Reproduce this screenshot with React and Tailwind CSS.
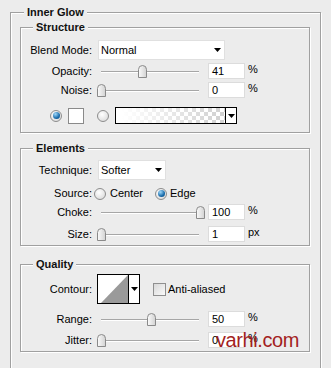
// Photoshop-style "Inner Glow" layer style panel

import React from 'react';

const Arrow = () => (
  <svg width="7" height="4" viewBox="0 0 7 4" className="shrink-0">
    <path d="M0 0H7L3.5 4Z" fill="#000" />
  </svg>
);

const Radio = ({ on }) => (
  <div className="w-[12px] h-[12px] shrink-0 rounded-full border border-[#8d8d8d] bg-[radial-gradient(circle_at_40%_35%,#ffffff,#d4d4d4)] flex items-center justify-center">
    {on && (
      <div className="w-[7px] h-[7px] rounded-full bg-[radial-gradient(circle_at_35%_30%,#9fd8fa,#1a6cab_60%,#0b4476)]" />
    )}
  </div>
);

const Thumb = ({ left }) => (
  <svg
    width="9"
    height="13"
    viewBox="0 0 9 13"
    className="absolute top-[2px]"
    style={{ left: `${left}px` }}
  >
    <defs>
      <linearGradient id="thumbFill" x1="0" x2="1" y1="0" y2="0">
        <stop offset="0" stopColor="#fbfbfb" />
        <stop offset="1" stopColor="#d2d2d2" />
      </linearGradient>
    </defs>
    <path
      d="M0.5 12.5V4.5Q0.5 0.5 4.5 0.5Q8.5 0.5 8.5 4.5V12.5Z"
      fill="url(#thumbFill)"
      stroke="#8a8a8a"
    />
  </svg>
);

const Slider = ({ pct }) => (
  <div className="relative ml-[5px] w-[107px] h-[16px] shrink-0">
    <div className="absolute left-[4px] right-[5px] top-[8px] h-[2px] border-t border-[#a6a6a6] bg-white" />
    <Thumb left={Math.round((pct * 99) / 100)} />
  </div>
);

const Label = ({ children }) => (
  <span className="w-[71px] shrink-0 text-right">{children}</span>
);

function SliderRow({ label, pct, value, unit, className }) {
  return (
    <div className={`flex items-center h-[16px] ${className}`}>
      <Label>{label}</Label>
      <Slider pct={pct} />
      <div className="ml-[4px] w-[37px] h-[16px] shrink-0 bg-white border border-[#dcdcdc] pl-[3px] leading-[14px]">
        {value}
      </div>
      <span className="ml-[3px] self-start leading-[12px]">{unit}</span>
    </div>
  );
}

function Group({ title, className, children }) {
  return (
    <fieldset
      className={`border border-[#a0a0a0] shadow-[1px_1px_0_#fff,inset_1px_1px_0_#fff] ${className}`}
    >
      <legend className="ml-[12px] px-[3px] h-[15px] leading-[15px] bg-[#ececec] font-bold text-[#111]">
        {title}
      </legend>
      {children}
    </fieldset>
  );
}

export default function App() {
  return (
    <div className="relative w-[331px] h-[368px] overflow-hidden bg-[#ececec] pt-[5px] text-[11px] text-black font-['Liberation_Sans',Arial,sans-serif]">
      {/* Outer frame */}
      <fieldset className="ml-[10px] w-[311px] pb-[40px] border border-[#a0a0a0] shadow-[1px_1px_0_#fff,inset_1px_1px_0_#fff]">
        <legend className="ml-[13px] px-[3px] h-[15px] leading-[15px] bg-[#ececec] font-bold text-[#111]">
          Inner Glow
        </legend>

        {/* Structure */}
        <Group title="Structure" className="ml-[9px] w-[290px] pb-[8px]">
          <div className="flex items-center h-[20px] mt-[5px]">
            <Label>Blend Mode:</Label>
            <div className="ml-[6px] w-[127px] h-[20px] bg-white border border-[#e0e0e0] flex items-center justify-between pl-[2px] pr-[3px]">
              <span>Normal</span>
              <Arrow />
            </div>
          </div>
          <SliderRow label="Opacity:" pct={41} value="41" unit="%" className="mt-[3px]" />
          <SliderRow label="Noise:" pct={0} value="0" unit="%" className="mt-[3px]" />
          <div className="flex items-center h-[17px] mt-[9px]">
            <div className="ml-[29px]">
              <Radio on />
            </div>
            <div className="ml-[6px] w-[16px] h-[16px] bg-white border border-[#8a8a8a]" />
            <div className="ml-[13px]">
              <Radio />
            </div>
            <div className="ml-[6px] w-[122px] h-[17px] border border-black flex">
              <div className="flex-1 bg-[linear-gradient(to_right,#fff_5%,rgba(255,255,255,0)),repeating-conic-gradient(#d0d0d0_0_25%,#fff_0_50%)] [background-size:100%_100%,8px_8px]" />
              <div className="w-[11px] border-l border-black bg-white flex items-center justify-center">
                <Arrow />
              </div>
            </div>
          </div>
        </Group>

        {/* Elements */}
        <Group title="Elements" className="ml-[9px] mt-[8px] w-[290px] pb-[3px]">
          <div className="flex items-center h-[20px] mt-[4px]">
            <Label>Technique:</Label>
            <div className="ml-[6px] w-[68px] h-[20px] bg-white border border-[#e0e0e0] flex items-center justify-between pl-[2px] pr-[3px]">
              <span>Softer</span>
              <Arrow />
            </div>
          </div>
          <div className="flex items-center h-[13px] mt-[7px]">
            <Label>Source:</Label>
            <div className="ml-[2px]">
              <Radio />
            </div>
            <span className="ml-[4px] w-[45px]">Center</span>
            <Radio on />
            <span className="ml-[3px]">Edge</span>
          </div>
          <SliderRow label="Choke:" pct={100} value="100" unit="%" className="mt-[4px]" />
          <SliderRow label="Size:" pct={0} value="1" unit="px" className="mt-[6px]" />
        </Group>

        {/* Quality */}
        <Group title="Quality" className="ml-[9px] mt-[11px] w-[290px] pb-[3px]">
          <div className="flex items-center h-[30px] mt-[2px]">
            <Label>Contour:</Label>
            <div className="ml-[5px] w-[43px] h-[30px] border border-black flex bg-white">
              <svg width="30" height="28" viewBox="0 0 30 28" className="shrink-0">
                <polygon points="3,28 30,0 30,28" fill="#9a9a9a" />
              </svg>
              <div className="w-[11px] border-l border-black flex items-center justify-center">
                <Arrow />
              </div>
            </div>
            <div className="ml-[13px] w-[13px] h-[13px] border border-[#8f8f8f] bg-[linear-gradient(135deg,#d8d8d8,#fafafa)]" />
            <span className="ml-[2px]">Anti-aliased</span>
          </div>
          <SliderRow label="Range:" pct={50} value="50" unit="%" className="mt-[7px]" />
          <SliderRow label="Jitter:" pct={0} value="0" unit="%" className="mt-[5px]" />
        </Group>
      </fieldset>

      {/* Watermark */}
      <span className="absolute left-[216px] top-[330px] text-[20px] leading-[20px] tracking-[-0.4px] text-[#a31f1f] font-['Liberation_Sans',Arial,sans-serif]">
        varhi.com
      </span>
    </div>
  );
}
